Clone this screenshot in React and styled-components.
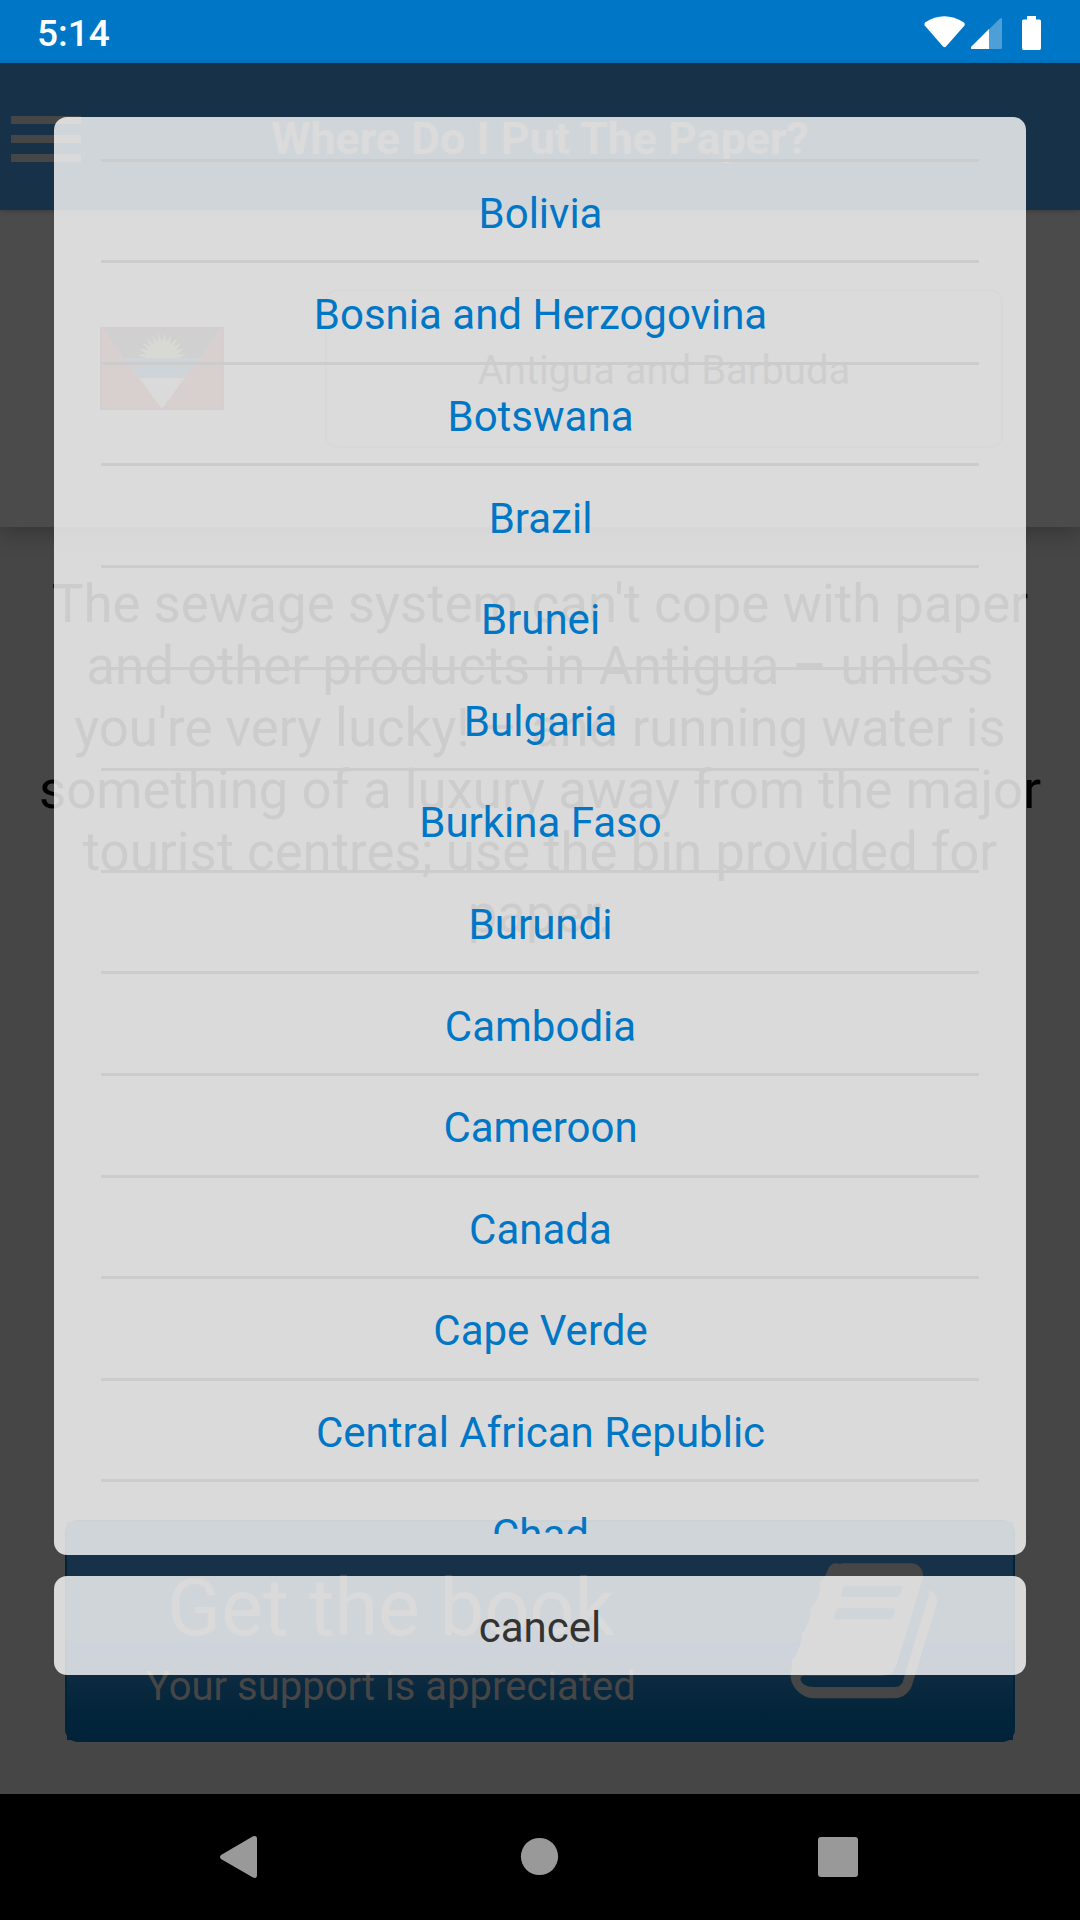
import React from "react";
import styled, { createGlobalStyle } from "styled-components";

const GlobalStyle = createGlobalStyle`
  * { box-sizing: border-box; }
  body { margin: 0; background: #000; font-family: Roboto, "Noto Sans", sans-serif; }
`;

const Phone = styled.div`
  position: relative;
  display: flex;
  flex-direction: column;
  width: 1080px;
  height: 1920px;
  overflow: hidden;
`;

const StatusBar = styled.div`
  display: flex;
  align-items: center;
  justify-content: space-between;
  flex: none;
  height: 63px;
  padding: 3px 0 0 37px;
  background: #0077c6;
  color: #fff;
  font-size: 37px;
  font-weight: 500;
`;

const StatusIcons = styled.svg`
  width: 160px;
  height: 60px;
  margin-top: -3px;
`;

const Screen = styled.main`
  display: flex;
  flex-direction: column;
  flex: 1;
  background: #464646;
`;

const Header = styled.header`
  position: relative;
  z-index: 1;
  display: grid;
  grid-template-columns: 96px 1fr 96px;
  align-items: center;
  flex: none;
  height: 147px;
  background: #173148;
  box-shadow: 0 1px 5px rgba(0, 0, 0, 0.22);
`;

const MenuIcon = styled.div`
  display: grid;
  gap: 11px;
  width: 70px;
  margin: 4px 0 0 11px;
`;

const MenuLine = styled.div`
  height: 8px;
  background: #464646;
`;

const Title = styled.h1`
  margin: 4px 0 0;
  color: #4a4a4a;
  font-size: 44.8px;
  font-weight: 700;
  line-height: 60px;
  text-align: center;
  white-space: nowrap;
`;

const CountryPanel = styled.section`
  display: flex;
  align-items: center;
  flex: none;
  height: 317px;
  padding: 0 77px 0 100px;
  background: #4b4b4b;
  box-shadow: 0 4px 24px rgba(0, 0, 0, 0.28);
`;

const Flag = styled.svg`
  width: 124px;
  height: 83px;
`;

const CountryField = styled.div`
  display: flex;
  align-items: center;
  justify-content: center;
  width: 679px;
  height: 159px;
  margin-left: 101px;
  padding-top: 3px;
  border: 2px solid #3d3d3d;
  border-radius: 13px;
  color: #0c0c0c;
  font-size: 40px;
`;

const Advice = styled.p`
  flex: 1;
  margin: 0;
  padding: 46px 0 0;
  color: #000;
  font-size: 52.75px;
  line-height: 62px;
  text-align: center;
  white-space: pre-line;
`;

const BookFrame = styled.div`
  flex: none;
  height: 222px;
  margin: 0 65px 52px;
  padding: 2px;
  border-radius: 13px;
  background: #00253b;
`;

const BookFace = styled.div`
  display: flex;
  justify-content: space-between;
  height: 218px;
  padding: 30px 71px 0 79px;
  background: linear-gradient(
    #173148 52%, #122950 57%, #11284f 62%, #0f2b41 66%,
    #0d2a41 70%, #03253a 87%, #00233a
  );
  color: #464646;
`;

const BookText = styled.div`
  display: flex;
  flex-direction: column;
  align-items: center;
  padding-top: 5px;
`;

const BookTitle = styled.div`
  font-size: 79.2px;
  line-height: 102px;
`;

const BookNote = styled.div`
  margin-top: 5px;
  font-size: 40px;
  line-height: 46px;
`;

const BookIcon = styled.svg`
  width: 157.5px;
  height: 157.5px;
  fill: #464646;
`;

const NavBar = styled.nav`
  display: flex;
  flex: none;
  height: 126px;
  background: #000;
`;

const NavIcons = styled.svg`
  width: 1080px;
  height: 126px;
  fill: #999;
`;

const Modal = styled.div`
  position: absolute;
  z-index: 2;
  inset: 117px 54px auto;
  display: flex;
  flex-direction: column;
  gap: 21px;
  color: #333;
  font-size: 42px;
`;

const Sheet = styled.div`
  height: 1438px;
  padding: 21px 47px;
  border-radius: 13px;
  background: rgba(255, 255, 255, 0.8);
`;

const OptionList = styled.div`
  height: 1396px;
  overflow: hidden;
`;

const Option = styled.div`
  display: flex;
  align-items: center;
  justify-content: center;
  height: ${({ $stub }) => ($stub ? "23.6px" : "101.6px")};
  padding: 5px 0 0 1px;
  border-bottom: 3px solid #ccc;
  color: #0077c6;
`;

const Cancel = styled.button`
  height: 99px;
  padding: 4px 0 0;
  border: 0;
  border-radius: 13px;
  background: rgba(255, 255, 255, 0.8);
  color: #333;
  font: inherit;
`;

const countries = [
  "Bolivia", "Bosnia and Herzogovina", "Botswana", "Brazil", "Brunei",
  "Bulgaria", "Burkina Faso", "Burundi", "Cambodia", "Cameroon", "Canada",
  "Cape Verde", "Central African Republic", "Chad",
];

const advice = `The sewage system can't cope with paper
and other products in Antigua – unless
you're very lucky! – and running water is
something of a luxury away from the major
tourist centres; use the bin provided for
paper.`;

const sunPoints = Array.from({ length: 25 }, (_, i) => {
  const angle = (Math.PI * i) / 24;
  const radius = i % 2 ? 25 : 16;
  return `${62 - radius * Math.cos(angle)},${31 - radius * Math.sin(angle)}`;
}).join(" ");

export default function App() {
  return (
    <Phone>
      <GlobalStyle />
      <StatusBar>
        <span>5:14</span>
        <StatusIcons viewBox="920 0 160 60">
          <path fill="#fff" d="M925 20.5Q944 8 964 20.5Q965.5 22 964.5 23.5L946 44.5Q944.5 46 943 44.5L924.7 23.5Q924 22 925 20.5Z" />
          <path fill="#fff" fillOpacity="0.3" d="M1000 16.5Q1002 15.2 1002 17V45.5Q1002 47 1000.5 47H972Q970 46.5 971.5 44.5Z" />
          <path fill="#fff" d="M989 27V47H972Q970 46.5 971.5 44.5Z" />
          <path fill="#fff" d="M1027 14h9v3.5h3.5q1.5 0 1.5 1.5v27q0 2-1.5 2h-16q-1.500 0-1.500-2v-27q0-1.500 1.500-1.500h3.500z" />
        </StatusIcons>
      </StatusBar>
      <Screen>
        <Header>
          <MenuIcon><MenuLine /><MenuLine /><MenuLine /></MenuIcon>
          <Title>Where Do I Put The Paper?</Title>
        </Header>
        <CountryPanel>
          <Flag viewBox="0 0 124 83">
            <rect width="124" height="83" fill="#3c1010" />
            <path d="M3 2H121L62 82Z" fill="#464646" />
            <path d="M3 2H121L100 31H24Z" fill="#171717" />
            <path d="M24 31H100L84.500 51H39.500Z" fill="#102a40" />
            <polygon points={sunPoints} fill="#424226" />
            <rect x="1" y="1" width="122" height="81" fill="none" stroke="#000" strokeOpacity="0.25" strokeWidth="2" />
          </Flag>
          <CountryField>Antigua and Barbuda</CountryField>
        </CountryPanel>
        <Advice>{advice}</Advice>
        <BookFrame>
          <BookFace>
            <BookText>
              <BookTitle>Get the book</BookTitle>
              <BookNote>Your support is appreciated</BookNote>
            </BookText>
            <BookIcon viewBox="0 0 1792 1792">
              <path d="M1703 478q40 57 18 129l-275 906q-19 64-76.500 107.500t-122.500 43.500h-923q-77 0-148.500-53.500t-99.500-131.500q-24-67-2-127 0-4 3-27t4-37q1-8-3-21.500t-3-19.500q2-11 8-21t16.500-23.500 16.500-23.500q23-38 45-91.500t30-91.500q3-10 .5-30t-.5-28q3-11 17-28t17-23q21-36 42-92t25-90q1-9-2.500-32t.5-28q4-13 22-30.500t22-22.500q19-26 42.500-84.500t27.500-96.500q1-8-3-25.500t-2-26.500q2-8 9-18t18-23 17-21q8-12 16.500-30.500t15-35 16-36 19.500-32 26.500-23.500 36-11.500 47.500 5.500l-1 3q38-9 51-9h761q74 0 114 56t18 130l-274 906q-36 119-71.500 153.500t-128.500 34.500h-869q-27 0-38 15-11 16-1 43 24 70 144 70h923q29 0 56-15.500t35-41.500l300-987q7-22 5-57 38 15 59 43zm-1064 2q-4 13 2 22.500t20 9.500h608q13 0 25.500-9.500t16.500-22.500l21-64q4-13-2-22.500t-20-9.500h-608q-13 0-25.500 9.500t-16.500 22.500zm-83 256q-4 13 2 22.500t20 9.500h608q13 0 25.500-9.500t16.500-22.500l21-64q4-13-2-22.500t-20-9.500h-608q-13 0-25.500 9.500t-16.500 22.500z" />
            </BookIcon>
          </BookFace>
        </BookFrame>
      </Screen>
      <NavBar>
        <NavIcons viewBox="0 1794 1080 126">
          <path d="M221 1855L253 1836.300Q257 1835 257 1839V1875Q257 1879 253 1877.500L221 1859Q219 1857 221 1855Z" />
          <circle cx="539.500" cy="1856.500" r="18.600" />
          <rect x="818" y="1837" width="40" height="40" rx="3" />
        </NavIcons>
      </NavBar>
      <Modal>
        <Sheet>
          <OptionList>
            <Option $stub />
            {countries.map((name) => <Option key={name}>{name}</Option>)}
          </OptionList>
        </Sheet>
        <Cancel>cancel</Cancel>
      </Modal>
    </Phone>
  );
}
